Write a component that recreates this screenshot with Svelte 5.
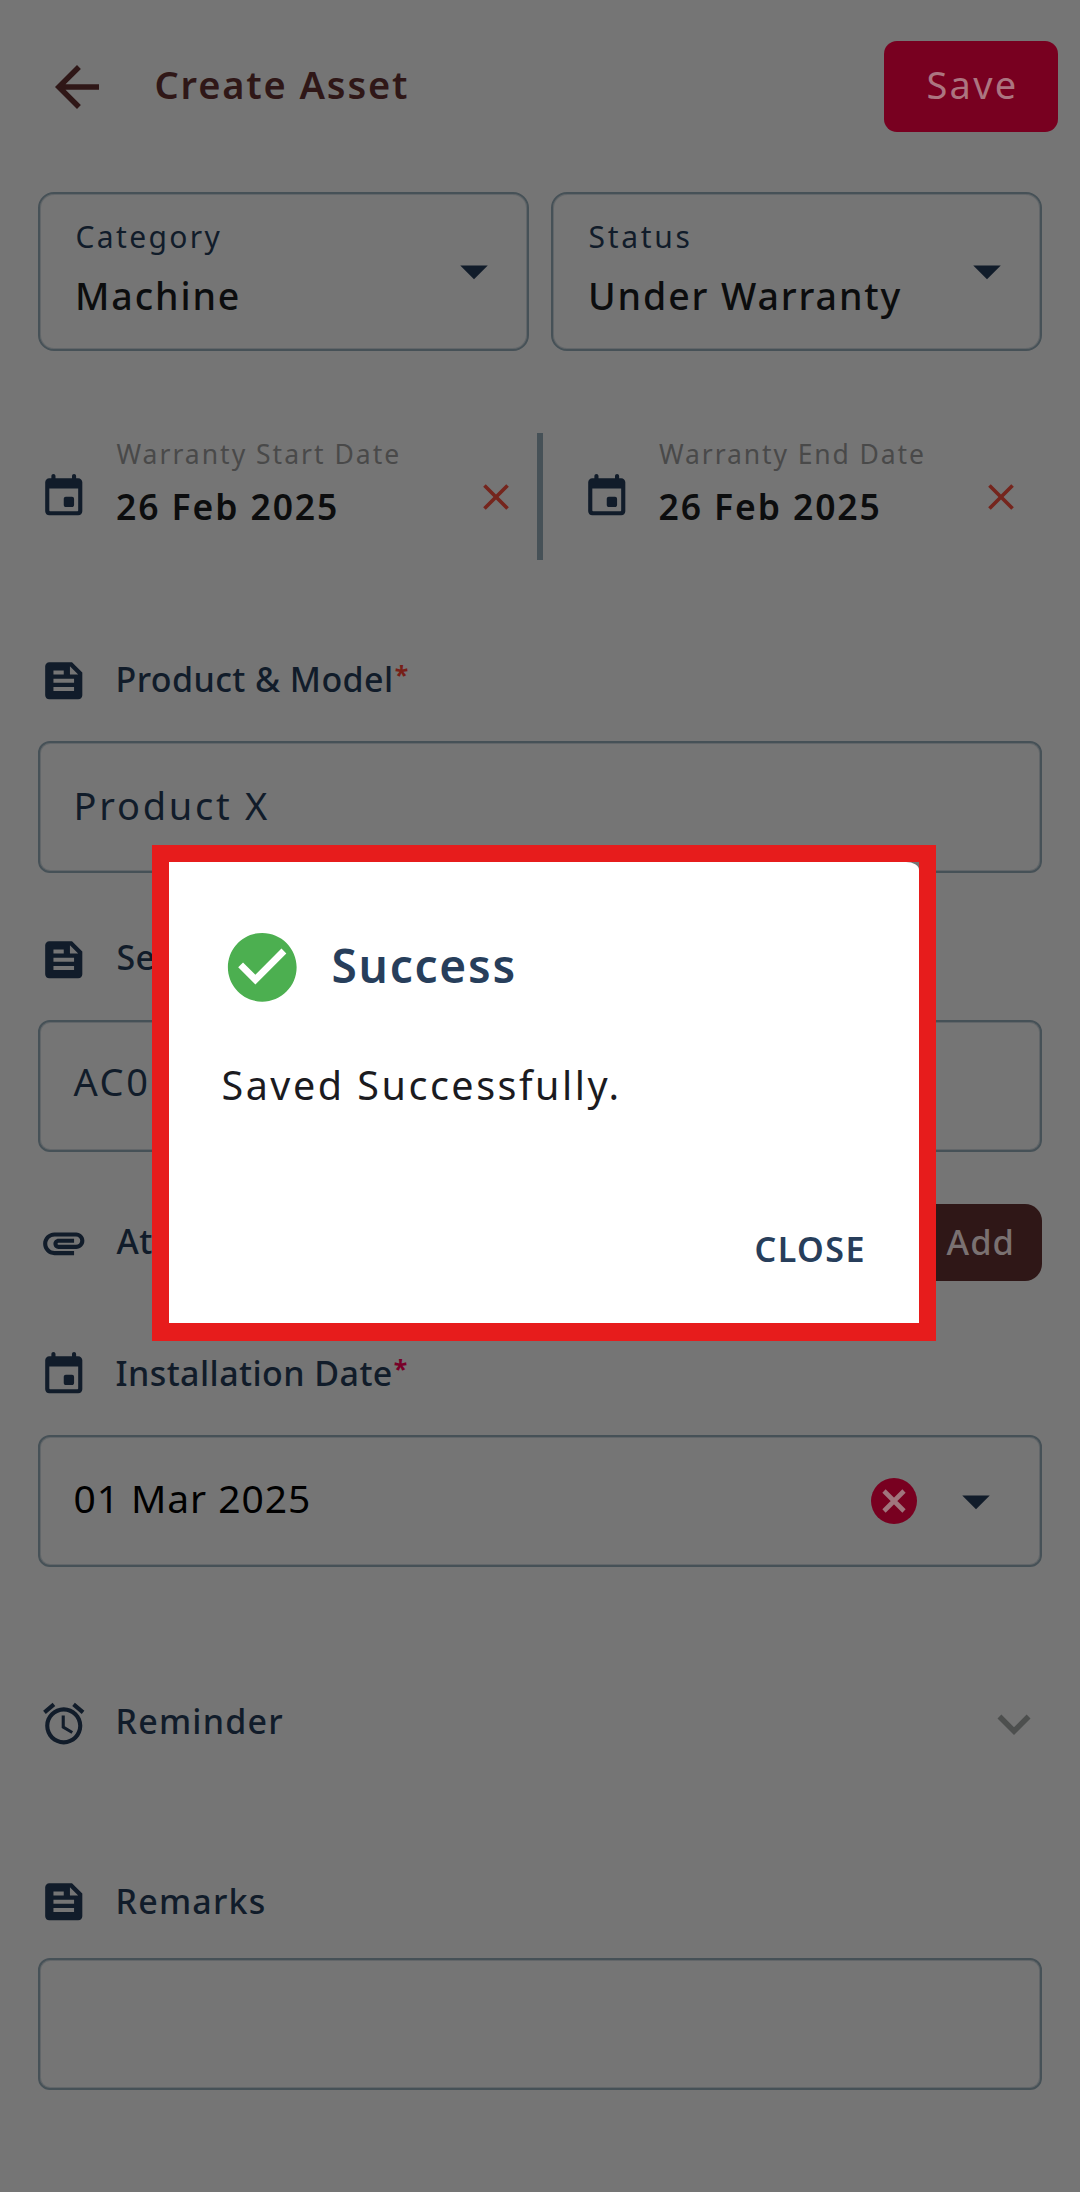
<script>
  const paths = {
    back: 'M20 11H7.83l5.59-5.59L12 4l-8 8 8 8 1.41-1.41L7.83 13H20v-2z',
    caret: 'M7 10l5 5 5-5z',
    close: 'M19 6.41L17.59 5 12 10.59 6.41 5 5 6.41 10.59 12 5 17.59 6.41 19 12 13.41 17.59 19 19 17.59 13.41 12z',
    event: 'M16 12h-3c-.55 0-1 .45-1 1v3c0 .55.45 1 1 1h3c.55 0 1-.45 1-1v-3c0-.55-.45-1-1-1zm0-10v1H8V2c0-.55-.45-1-1-1s-1 .45-1 1v1H5c-1.11 0-1.99.9-1.99 2L3 19c0 1.1.89 2 2 2h14c1.1 0 2-.9 2-2V5c0-1.1-.9-2-2-2h-1V2c0-.55-.45-1-1-1s-1 .45-1 1zm2.5 17h-13c-.28 0-.5-.22-.5-.5V8h14v10.5c0 .28-.22.5-.5.5z',
    feed: 'M16 3H5c-1.1 0-2 .9-2 2v14c0 1.1.9 2 2 2h14c1.1 0 2-.9 2-2V8l-5-5zM7 7h5v2H7V7zm10 10H7v-2h10v2zm0-4H7v-2h10v2zm-2-4V5l4 4h-4z',
    clip: 'M2 12.5C2 9.46 4.46 7 7.5 7H18c2.21 0 4 1.79 4 4s-1.79 4-4 4H9.5C8.12 15 7 13.88 7 12.5S8.12 10 9.5 10H17v2H9.41c-.55 0-.55 1 0 1H18c1.1 0 2-.9 2-2s-.9-2-2-2H7.5C5.57 9 4 10.57 4 12.5S5.57 16 7.5 16H17v2H7.5C4.46 18 2 15.54 2 12.5z',
    alarm: 'M22 5.72l-4.6-3.86-1.29 1.53 4.6 3.86L22 5.72zM7.88 3.39L6.6 1.86 2 5.71l1.29 1.53 4.59-3.85zM12.5 8H11v6l4.75 2.85.75-1.23-4-2.37V8zM12 4c-4.97 0-9 4.03-9 9s4.02 9 9 9c4.97 0 9-4.03 9-9s-4.03-9-9-9zm0 16c-3.87 0-7-3.13-7-7s3.13-7 7-7 7 3.13 7 7-3.13 7-7 7z',
    chevron: 'M16.59 8.59L12 13.17 7.41 8.59 6 10l6 6 6-6z',
    check: 'M12 2C6.48 2 2 6.48 2 12s4.48 10 10 10 10-4.48 10-10S17.52 2 12 2zm-2 15l-5-5 1.41-1.41L10 14.17l7.59-7.59L19 8l-9 9z',
    cancel: 'M12 2C6.47 2 2 6.47 2 12s4.470 10 10 10 10-4.470 10-10S17.530 2 12 2z',
  };
</script>

{#snippet icon(name, cls)}
  <svg class="icon {cls}" viewBox="0 0 24 24" aria-hidden="true"><path d={paths[name]} /></svg>
{/snippet}

<div class="screen">
  <header>
    {@render icon('back', 'lg maroon')}
    <h1>Create Asset</h1>
    <button class="save">Save</button>
  </header>

  <main>
    <div class="selects">
      <div class="select">
        <div class="lines"><span class="label">Category</span><span class="value">Machine</span></div>
        {@render icon('caret', 'lg navy')}
      </div>
      <div class="select">
        <div class="lines"><span class="label wide">Status</span><span class="value">Under Warranty</span></div>
        {@render icon('caret', 'lg navy')}
      </div>
    </div>

    <div class="dates">
      <div class="date">
        {@render icon('event', 'sm navy')}
        <div class="lines"><span class="hint">Warranty Start Date</span><strong>26 Feb 2025</strong></div>
        {@render icon('close', 'xs red')}
      </div>
      <div class="divider"></div>
      <div class="date second">
        {@render icon('event', 'sm navy')}
        <div class="lines"><span class="hint end">Warranty End Date</span><strong>26 Feb 2025</strong></div>
        {@render icon('close', 'xs red')}
      </div>
    </div>

    <div class="row product">
      {@render icon('feed', 'sm navy')}
      <h2>Product &amp; Model<span class="star">*</span></h2>
    </div>
    <div class="field f-product"><span>Product X</span></div>

    <div class="row serial">
      {@render icon('feed', 'sm navy')}
      <h2>Se</h2>
    </div>
    <div class="field f-serial"><span>AC0</span></div>

    <div class="row attach">
      {@render icon('clip', 'sm navy')}
      <h2>At</h2>
      <button class="add">Add</button>
    </div>

    <div class="row install">
      {@render icon('event', 'sm navy')}
      <h2>Installation Date<span class="star pink">*</span></h2>
    </div>
    <div class="field f-install">
      <span>01 Mar 2025</span>
      <svg class="clear" viewBox="0 0 46 46" aria-hidden="true">
        <circle cx="23" cy="23" r="23" />
        <path d="M13 13l20 20M33 13l-20 20" />
      </svg>
      {@render icon('caret', 'lg navy')}
    </div>

    <div class="row reminder">
      {@render icon('alarm', 'sm navy')}
      <h2>Reminder</h2>
      {@render icon('chevron', 'lg grey')}
    </div>

    <div class="row remarks">
      {@render icon('feed', 'sm navy')}
      <h2>Remarks</h2>
    </div>
    <div class="field f-remarks"></div>
  </main>

  <div class="frame">
    <div class="dialog">
      <div class="head">
        {@render icon('check', 'xl green')}
        <h3>Success</h3>
      </div>
      <p>Saved Successfully.</p>
      <button class="dismiss">CLOSE</button>
    </div>
  </div>
</div>

<style>
  :global(body) { background: #757575; }
  .screen {
    position: relative;
    box-sizing: border-box;
    width: 1080px;
    height: 2192px;
    overflow: hidden;
    background: #757575;
    font-family: "Noto Sans", sans-serif;
    color: #111c2a;
  }
  h1, h2, h3, p { margin: 0; white-space: nowrap; }
  button { border: 0; padding: 0; font-family: inherit; }
  span, strong { white-space: nowrap; }

  .icon { display: block; flex: none; fill: currentColor; }
  .xs { width: 44px; height: 44px; }
  .sm { width: 49.5px; height: 49.5px; }
  .lg { width: 66px; height: 66px; }
  .xl { width: 82.5px; height: 82.5px; }
  .navy { color: #111c2a; }
  .maroon { color: #2f1717; }
  .red { color: #75251d; }
  .grey { color: #4d4f4e; }
  .green { color: #4caf50; }

  header {
    display: flex;
    align-items: center;
    box-sizing: border-box;
    height: 173.5px;
    padding: 0 22px 0 44px;
  }
  h1 {
    margin-left: 44.5px;
    padding-bottom: 5px;
    font-size: 38px;
    line-height: 54px;
    font-weight: 600;
    letter-spacing: 1.85px;
    color: #2f1717;
  }
  .save {
    width: 174px;
    height: 91px;
    margin-left: auto;
    padding: 0 0 5px 3px;
    border-radius: 13px;
    background: #780020;
    color: #ac7580;
    font-size: 38px;
    letter-spacing: 2.3px;
  }

  main { padding: 18px 38px 0; }
  .lines { display: flex; flex-direction: column; }

  .selects { display: grid; grid-template-columns: 1fr 1fr; gap: 22px; }
  .select, .field {
    box-sizing: border-box;
    border: 2px solid #465157;
    box-shadow: inset 0 0 0 1px rgba(70, 81, 87, 0.4);
  }
  .select {
    display: flex;
    justify-content: space-between;
    align-items: center;
    height: 159.5px;
    padding: 0 20px 0 35.5px;
    border-radius: 16px;
  }
  .select .lines { align-self: flex-start; padding-top: 21.5px; gap: 10.5px; }
  .label { font-size: 30px; line-height: 44px; letter-spacing: 2.35px; }
  .label.wide { letter-spacing: 2.7px; }
  .value {
    margin-left: -0.5px;
    font-size: 37.5px;
    line-height: 52px;
    font-weight: 500;
    letter-spacing: 1.9px;
    color: #0c0d0e;
  }

  .dates { display: flex; height: 127px; margin-top: 82px; }
  .date { display: flex; align-items: center; flex: none; box-sizing: border-box; width: 499px; padding: 0 19px 0 1px; }
  .date.second { padding-left: 38.5px; }
  .date .lines { align-self: flex-start; margin: 3px auto 0 28px; gap: 9.5px; }
  .hint { font-size: 26.5px; line-height: 36px; letter-spacing: 2px; color: #494949; }
  .hint.end { letter-spacing: 1.9px; }
  .date strong {
    margin-left: -0.5px;
    font-size: 35.5px;
    line-height: 48px;
    font-weight: 600;
    letter-spacing: 1.9px;
    color: #0c0d0e;
  }
  .divider { width: 6px; background: #465157; }

  .row { display: flex; align-items: center; height: 50px; padding-left: 1px; }
  h2 {
    margin-left: 27px;
    padding-bottom: 4.5px;
    font-size: 34px;
    line-height: 46px;
    font-weight: 500;
    letter-spacing: 0.42px;
  }
  .reminder h2, .remarks h2 { letter-spacing: 1.2px; }
  .serial h2, .attach h2 { margin-left: 28px; }
  .star {
    margin-left: 1px;
    font-size: 25px;
    line-height: 0;
    font-weight: 700;
    vertical-align: 8px;
    color: #771f18;
  }
  .star.pink { color: #780028; }

  .field {
    display: flex;
    align-items: center;
    height: 132px;
    padding: 0 31px 0 33.5px;
    border-radius: 12px;
  }
  .field > span { padding-bottom: 5px; font-size: 38px; line-height: 54px; letter-spacing: 2.75px; }

  .product { margin-top: 96px; }
  .f-product { margin-top: 35px; }
  .serial { margin-top: 61.5px; }
  .f-serial { margin-top: 35px; }
  .f-serial > span { padding-bottom: 9px; letter-spacing: 2.6px; }

  .attach { height: 77px; margin-top: 52.5px; }
  .attach h2 { padding-bottom: 3px; }
  .add {
    width: 160px;
    height: 77px;
    margin-left: auto;
    padding: 0 27px 3px 0;
    border-radius: 17px;
    background: #2f1717;
    color: #7a7171;
    font-size: 34.5px;
    font-weight: 500;
    letter-spacing: 1px;
    text-align: right;
  }

  .install { margin-top: 69px; }
  .f-install { margin-top: 34.5px; }
  .f-install > span { padding-bottom: 6px; font-size: 39px; letter-spacing: 0.92px; color: #000; }
  .clear { width: 46px; height: 46px; margin: 0 26.5px 0 auto; fill: #780020; stroke: #a0757d; stroke-width: 4.6; }
  .clear circle { stroke: none; }

  .reminder { margin-top: 132.5px; }
  .reminder h2 { padding-bottom: 6px; }
  .reminder .grey { margin: 0 -5px 0 auto; }
  .remarks { margin-top: 128px; }
  .remarks h2 { padding-bottom: 3px; }
  .f-remarks { margin-top: 30.5px; }

  .frame {
    position: absolute;
    left: 152px;
    top: 845px;
    box-sizing: border-box;
    width: 784px;
    height: 496px;
    border: 17px solid #e71c1c;
    border-bottom-width: 18px;
    background: #757575;
  }
  .dialog {
    display: flex;
    flex-direction: column;
    box-sizing: border-box;
    height: 100%;
    padding: 63.5px 53px 0 52px;
    border-top-right-radius: 13px 8px;
    background: #fff;
  }
  .head { display: flex; align-items: center; gap: 28px; }
  h3 {
    padding-bottom: 4px;
    font-size: 46px;
    line-height: 62px;
    font-weight: 600;
    letter-spacing: 1.76px;
    color: #273e5b;
  }
  p { margin-top: 50px; padding-left: 0.5px; font-size: 39.5px; line-height: 54px; letter-spacing: 2.51px; color: #1b1b1f; }
  .dismiss {
    align-self: flex-end;
    height: 48px;
    margin-top: 113px;
    background: none;
    font-size: 34px;
    line-height: 48px;
    font-weight: 600;
    letter-spacing: 1.49px;
    color: #273e5b;
  }
</style>
